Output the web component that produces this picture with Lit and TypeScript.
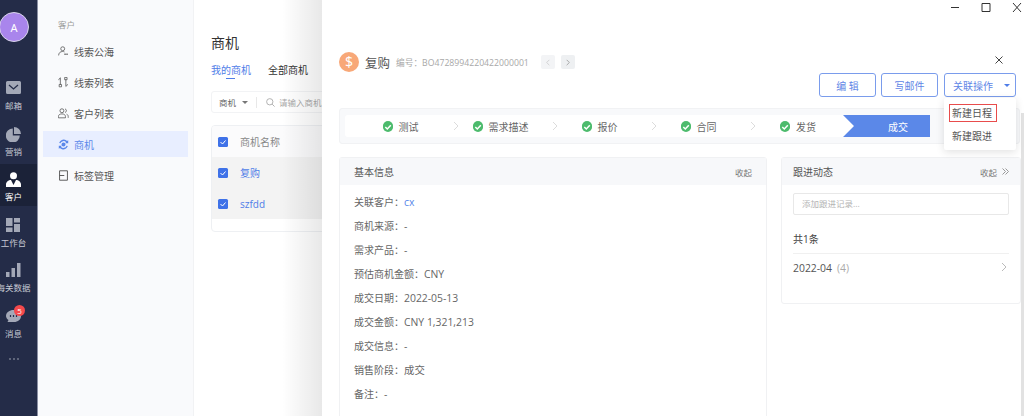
import { LitElement, html, css, svg } from "lit";
import { customElement } from "lit/decorators.js";

const railItems = [
  { label: "邮箱", icon: svg`<path d="M0 1.500A1.500 1.500 0 0 1 1.500 0h12A1.500 1.500 0 0 1 15 1.500v10a1.500 1.500 0 0 1-1.500 1.500h-12A1.500 1.500 0 0 1 0 11.500z" fill="#a3a8b7"/><path d="M3 4l4.500 4L12 4" fill="none" stroke="#242c48" stroke-width="1.300"/>` },
  { label: "营销", icon: svg`<path d="M6.800 1.500v7h7A7 7 0 1 1 6.800 1.500z" fill="#a3a8b7"/><path d="M8 0a7 7 0 0 1 7 7H8z" fill="#a3a8b7"/>` },
  { label: "客户", active: true, icon: svg`<circle cx="7.500" cy="3.700" r="3.500" fill="#fff"/><path d="M0 15v-2.500C0 10 2.500 8 5 8l2.500 5L10 8c2.500 0 5 2 5 4.500V15z" fill="#fff"/>` },
  { label: "工作台", icon: svg`<path d="M0 0h6.500v8H0zM8 0h6v4.500H8zM8 6h6v8H8zM0 9.500h6.500V14H0z" fill="#a3a8b7"/>` },
  { label: "海关数据", icon: svg`<path d="M0 9h3.500v5H0zM5.500 5H9v9H5.500zM11 0h3.500v14H11z" fill="#a3a8b7"/>` },
  { label: "消息", badge: "5", icon: svg`<path d="M7.500 1C11.500 1 15 3.500 15 7s-3 6-7 6H1.500l1-2C1 10 0 8.500 0 7c0-3.500 3.500-6 7.500-6z" fill="#a3a8b7"/><path d="M4.500 6v2M7.500 6v2M10.500 6v2" stroke="#242c48" stroke-width="1.200"/>` },
];

const navItems = [
  { label: "线索公海", icon: svg`<circle cx="6" cy="3.500" r="2.500" fill="none" stroke="#555" stroke-width="1"/><path d="M.8 12c0-3 2-5 5-5 1 0 2 .2 2.500.6" fill="none" stroke="#555"/><path d="M8 9.500h2v2H8zM10.500 9.500h2v2h-2z" fill="#777"/>` },
  { label: "线索列表", icon: svg`<path d="M3 1v9M3 1C1.500 2 1 3 1 4M10 12V3M10 12c1.500-1 2-2 2-3M1.500 9.500h3v3h-3zM8.500.5h3v3h-3z" fill="none" stroke="#555"/>` },
  { label: "客户列表", icon: svg`<circle cx="5" cy="3.500" r="2.500" fill="none" stroke="#555"/><path d="M.5 12.500v-1.500c0-2 1.500-3.500 4.500-3.500s4.500 1.500 4.500 3.500v1.500zM9 1.200c2 .3 2.500 3.600 0 4.600M11 7.800c1.300.6 2 1.700 2 3v1.700" fill="none" stroke="#555"/>` },
  { label: "商机", active: true, icon: svg`<path d="M1.500 5a6 6 0 0 1 10-2.500L13 1.500v4H9l1.300-1.300A4.300 4.300 0 0 0 3 5.500zM12.500 9a6 6 0 0 1-10 2.500L1 12.500v-4h4L3.700 9.800A4.300 4.300 0 0 0 11 8.500z" fill="#5b88ea"/><circle cx="7" cy="7" r="2.500" fill="#5b88ea"/>` },
  { label: "标签管理", icon: svg`<path d="M2 1h10v12H2zM2 7h6" fill="none" stroke="#555" stroke-width="1.200"/>` },
];

const steps = ["测试", "需求描述", "报价", "合同", "发货"];

const details: [string, string, boolean?][] = [
  ["关联客户：", "cx", true],
  ["商机来源：", "-"],
  ["需求产品：", "-"],
  ["预估商机金额：", "CNY"],
  ["成交日期：", "2022-05-13"],
  ["成交金额：", "CNY 1,321,213"],
  ["成交信息：", "-"],
  ["销售阶段：", "成交"],
  ["备注：", "-"],
];

const chevron = html`<svg class="chev" width="6" height="10" viewBox="0 0 6 10"><path d="M1 1l4 4-4 4" fill="none" stroke="currentColor"/></svg>`;
const check = html`<svg class="tick" width="10" height="10" viewBox="0 0 10 10"><path d="M2.300 5 4.300 7 7.800 3.300" fill="none" stroke="#fff" stroke-width="1.500"/></svg>`;
const box = html`<span class="box"><svg width="8" height="8" viewBox="0 0 8 8"><path d="M1.500 4l2 2 3-3.500" fill="none" stroke="#fff" stroke-width="1"/></svg></span>`;

@customElement("app-root")
export class AppRoot extends LitElement {
  static styles = css`
    :host {
      display: block;
      width: 1024px;
      height: 416px;
      overflow: hidden;
      position: relative;
      font-family: "Open Sans", "Noto Sans CJK SC", sans-serif;
      font-size: 10px;
      color: #555;
      background: #fff;
    }
    .layout { display: flex; height: 416px; }
    .rail {
      width: 37px;
      flex: none;
      background: #242c48;
      border-right: 1px solid #8a8fa3;
      display: flex;
      flex-direction: column;
      color: #c6c9d3;
      overflow: hidden;
    }
    .avatar {
      width: 28px;
      height: 28px;
      margin: 12px 0 0 -1px;
      border-radius: 50%;
      background: #a985ec;
      border: 1px solid #d8d4ea;
      color: #fff;
      font-size: 11px;
      display: flex;
      align-items: center;
      justify-content: center;
      font-family: "Noto Sans", sans-serif;
      flex: none;
    }
    .rail-list { margin-top: 31px; display: flex; flex-direction: column; gap: 3.500px; }
    .rail-item {
      height: 42px;
      padding: 8px 10px 0 0;
      display: flex;
      flex-direction: column;
      align-items: center;
      gap: 4px;
      font-size: 8.500px;
      line-height: 11px;
      white-space: nowrap;
      box-sizing: border-box;
    }
    .rail-item.active { background: #1b2238; color: #fff; }
    .rail-icon { position: relative; width: 15px; height: 15px; display: block; flex: none; }
    .rail-icon svg { display: block; }
    .badge {
      position: absolute;
      top: -4px;
      left: 8px;
      width: 11px;
      height: 11px;
      border-radius: 50%;
      background: #f4494c;
      color: #fff;
      font-size: 8px;
      line-height: 11px;
      text-align: center;
    }
    .more { width: 27px; display: flex; justify-content: center; margin-top: 15px; }
    .more svg { display: block; }
    .nav {
      width: 156px;
      flex: none;
      background: #f9fafc;
      border-right: 1px solid #f1f2f4;
      box-sizing: border-box;
      padding: 18px 5px 0;
    }
    .nav-title { font-size: 8.500px; color: #9a9a9a; padding-left: 15px; line-height: 14px; }
    .nav-list { margin-top: 6px; display: flex; flex-direction: column; gap: 5px; }
    .nav-item {
      height: 26px;
      display: flex;
      align-items: center;
      gap: 5px;
      padding-left: 15px;
      font-size: 10px;
      color: #555;
    }
    .nav-item.active { background: #e8eeff; color: #5b88ea; }
    .main { flex: 1; padding: 33px 17px 0; box-sizing: border-box; }
    .main h1 { font-size: 14px; font-weight: 400; color: #333; margin: 0; line-height: 20px; }
    .tabs { display: flex; gap: 17px; margin-top: 10px; font-size: 10px; line-height: 14px; color: #333; }
    .tab { position: relative; padding-bottom: 2px; }
    .tab.on { color: #4f7de8; }
    .tab.on::after {
      content: "";
      position: absolute;
      left: 15px;
      width: 9px;
      bottom: 0;
      height: 1px;
      background: #4f7de8;
    }
    .filter {
      margin-top: 12px;
      height: 22px;
      border: 1px solid #f2f3f5;
      border-radius: 3px;
      display: flex;
      align-items: center;
      padding-left: 7px;
      gap: 6px;
      box-sizing: border-box;
      color: #666;
      font-size: 8.500px;
    }
    .caret { width: 0; height: 0; border: 3px solid transparent; border-top: 3px solid #777; border-bottom: 0; }
    .sep { width: 1px; height: 11px; background: #e8e8e8; margin: 0 3px 0 2px; }
    .ph { color: #aaa; margin-left: -2px; white-space: nowrap; }
    .table {
      margin-top: 12px;
      height: 107px;
      border: 1px solid #eef0f3;
      border-radius: 4px;
      box-sizing: border-box;
      overflow: hidden;
      font-size: 10px;
    }
    .tr { height: 31px; display: flex; align-items: center; gap: 12px; padding-left: 6px; }
    .tr.head { color: #888; background: #fbfbfc; }
    .tr.row { background: #f3f3f3; color: #4f7de8; }
    .box {
      width: 10px;
      height: 10px;
      border-radius: 1.500px;
      background: #3f72e8;
      display: flex;
      align-items: center;
      justify-content: center;
      flex: none;
    }
    .shade {
      position: absolute;
      left: 282px;
      top: 0;
      bottom: 0;
      width: 40px;
      background: linear-gradient(to right, rgba(0,0,0,0), rgba(0,0,0,.09));
    }
    .drawer {
      position: absolute;
      left: 322px;
      top: 0;
      right: 0;
      bottom: 0;
      background: #fff;
      padding: 0 4px 0 17px;
      box-sizing: border-box;
      display: flex;
      flex-direction: column;
    }
    .win {
      position: absolute;
      top: 2px;
      right: 2px;
      display: flex;
      align-items: center;
      gap: 21px;
      height: 11px;
    }
    .win svg { display: block; }
    .close { position: absolute; top: 56px; right: 21px; display: block; }
    .title-row {
      margin-top: 52px;
      height: 20px;
      display: flex;
      align-items: center;
      flex: none;
    }
    .coin {
      width: 20px;
      height: 20px;
      border-radius: 50%;
      background: #f8a878;
      color: #fff;
      font-size: 14px;
      line-height: 20px;
      text-align: center;
      font-family: "Noto Sans", sans-serif;
    }
    .title-row b { font-weight: 400; font-size: 12.500px; color: #555; margin-left: 6px; }
    .code { font-size: 8.700px; color: #a8a8a8; margin-left: 6px; white-space: nowrap; }
    .pager {
      width: 14px;
      height: 14px;
      background: #eef0f2;
      border-radius: 2px;
      display: flex;
      align-items: center;
      justify-content: center;
      color: #888;
    }
    .pager.first { margin-left: 12px; margin-right: 6px; color: #c2c2c2; background: #f3f4f6; }
    .pager .chev { width: 4px; height: 7px; }
    .pager .flip { transform: scaleX(-1); }
    .actions { display: flex; justify-content: flex-end; gap: 5px; margin-top: 1px; padding-right: 4px; height: 24px; flex: none; }
    .btn {
      height: 24px;
      width: 57px;
      border: 1px solid #7a9cec;
      border-radius: 3px;
      box-sizing: border-box;
      color: #5f86e6;
      font-size: 10px;
      display: flex;
      align-items: center;
      justify-content: center;
    }
    .btn.wide { width: 72px; margin-left: 1px; justify-content: flex-start; padding-left: 8px; gap: 11px; }
    .btn .caret { border-top-color: #4f7de8; }
    .stage {
      margin-top: 11px;
      height: 36px;
      background: #f8f9fb;
      border: 1px solid #f1f2f4;
      border-radius: 3px;
      box-sizing: border-box;
      padding: 6px 5px;
      width: 681px;
      flex: none;
    }
    .stage-in { display: flex; height: 22px; width: 585px; background: #fff; border-radius: 3px; }
    .step {
      width: 99px;
      flex: none;
      position: relative;
      display: flex;
      align-items: center;
      justify-content: center;
      gap: 6px;
      font-size: 10px;
      color: #666;
      padding-right: 10px;
      box-sizing: border-box;
    }
    .step:first-child { width: 111px; padding-right: 0; }
    .step:nth-child(5) { width: 90px; padding-right: 0; }
    .step .chev { position: absolute; right: -3px; color: #dcdcdc; top: 6px; }
    .tick { width: 10px; height: 10px; border-radius: 50%; background: #4dbb6d; flex: none; }
    .done {
      width: 87px;
      flex: none;
      box-sizing: border-box;
      padding-left: 23px;
      background: #5b88e8;
      color: #fff;
      font-size: 10px;
      display: flex;
      align-items: center;
      justify-content: center;
      clip-path: polygon(0 0, 100% 0, 100% 100%, 0 100%, 11px 50%);
    }
    .cards { display: flex; gap: 14px; margin-top: 13px; align-items: flex-start; }
    .card {
      border: 1px solid #f0f1f3;
      border-radius: 3px;
      box-sizing: border-box;
      background: #fff;
      flex: none;
    }
    .card.left { width: 428px; height: 280px; }
    .card.right { width: 240px; height: 147px; }
    .card-head {
      height: 27px;
      background: #f7f8fa;
      display: flex;
      align-items: center;
      justify-content: space-between;
      padding: 0 14px;
      font-size: 10px;
      color: #555;
    }
    .card.right .card-head { padding: 0 11px; }
    .fold { font-size: 8.500px; color: #777; display: flex; align-items: center; gap: 5px; }
    .fold svg { display: block; }
    .rows { padding: 5px 14px; display: flex; flex-direction: column; }
    .rows div { height: 24px; line-height: 24px; font-size: 10px; color: #666; white-space: nowrap; }
    .rows span { font-size: 10.400px; }
    .rows a { color: #5b88ea; }
    .follow { padding: 8px 11px 0; }
    .input {
      height: 22px;
      border: 1px solid #e8e8e8;
      border-radius: 2px;
      box-sizing: border-box;
      padding-left: 8px;
      color: #b4b4b4;
      font-size: 8.500px;
      line-height: 20px;
    }
    .total { margin-top: 16px; height: 22px; line-height: 16px; font-size: 10px; color: #444; border-bottom: 1px solid #f0f0f0; }
    .month { display: flex; justify-content: space-between; align-items: center; height: 28px; font-size: 10.400px; color: #555; }
    .month i { font-style: normal; color: #aaa; margin-left: 5px; }
    .month .chev { color: #bbb; margin-right: 2px; margin-top: -3px; }
    .menu {
      position: absolute;
      left: 944px;
      top: 98px;
      width: 72px;
      height: 52px;
      background: #fff;
      box-shadow: 0 2px 8px rgba(0,0,0,.12);
      border-radius: 2px;
      box-sizing: border-box;
      padding: 6px 5px;
      font-size: 10px;
      color: #555;
    }
    .menu div { line-height: 16px; height: 18px; padding-left: 2px; border: 1px solid transparent; box-sizing: border-box; }
    .menu .pick { border-color: #e84c4c; width: 48px; }
    .menu div + div { margin-top: 5px; }
    .scroll { position: absolute; right: 0; top: 113px; bottom: 0; width: 3px; background: #e2e2e2; }
  `;

  render() {
    return html`
      <div class="layout">
        <aside class="rail">
          <div class="avatar">A</div>
          <div class="rail-list">
            ${railItems.map(
              (r) => html`<div class="rail-item ${r.active ? "active" : ""}">
                <span class="rail-icon">
                  <svg width="15" height="15" viewBox="0 0 15 15">${r.icon}</svg>
                  ${r.badge ? html`<span class="badge">${r.badge}</span>` : ""}
                </span>
                <span>${r.label}</span>
              </div>`
            )}
          </div>
          <div class="more"><svg width="10" height="2" viewBox="0 0 10 2"><circle cx="1" cy="1" r=".7" fill="#c6c9d3"/><circle cx="5" cy="1" r=".7" fill="#c6c9d3"/><circle cx="9" cy="1" r=".7" fill="#c6c9d3"/></svg></div>
        </aside>
        <nav class="nav">
          <div class="nav-title">客户</div>
          <div class="nav-list">
            ${navItems.map(
              (n) => html`<div class="nav-item ${n.active ? "active" : ""}">
                <svg width="11" height="11" viewBox="0 0 14 14">${n.icon}</svg>
                <span>${n.label}</span>
              </div>`
            )}
          </div>
        </nav>
        <main class="main">
          <h1>商机</h1>
          <div class="tabs">
            <span class="tab on">我的商机</span>
            <span class="tab">全部商机</span>
          </div>
          <div class="filter">
            <span>商机</span><span class="caret"></span><span class="sep"></span>
            <svg width="9" height="9" viewBox="0 0 10 10"><circle cx="4.200" cy="4.200" r="3.500" fill="none" stroke="#aaa"/><path d="M6.800 6.800 9.500 9.500" stroke="#aaa"/></svg>
            <span class="ph">请输入商机名称</span>
          </div>
          <div class="table">
            <div class="tr head">${box}<span>商机名称</span></div>
            <div class="tr row">${box}<span>复购</span></div>
            <div class="tr row">${box}<span>szfdd</span></div>
          </div>
        </main>
      </div>
      <div class="shade"></div>
      <section class="drawer">
        <div class="win">
          <svg width="9" height="11" viewBox="0 0 9 11"><path d="M0 5.500h8" stroke="#333"/></svg>
          <svg width="10" height="11" viewBox="0 0 10 11"><path d="M1 1.500h8v8H1z" fill="none" stroke="#333"/></svg>
          <svg width="10" height="11" viewBox="0 0 10 11"><path d="M1 1l8 9M9 1l-8 9" fill="none" stroke="#333"/></svg>
        </div>
        <svg class="close" width="8" height="8" viewBox="0 0 8 8"><path d="M.5.500l7 7M7.500.500l-7 7" stroke="#444"/></svg>
        <div class="title-row">
          <span class="coin">$</span>
          <b>复购</b>
          <span class="code">编号：BO4728994220422000001</span>
          <span class="pager first"><span class="flip">${chevron}</span></span>
          <span class="pager">${chevron}</span>
        </div>
        <div class="actions">
          <span class="btn">编 辑</span>
          <span class="btn">写邮件</span>
          <span class="btn wide">关联操作<span class="caret"></span></span>
        </div>
        <div class="stage">
          <div class="stage-in">
            ${steps.map(
              (s, i) => html`<div class="step">
                <span class="tick">${check}</span><span>${s}</span>
                ${i < 4 ? chevron : ""}
              </div>`
            )}
            <div class="done">成交</div>
          </div>
        </div>
        <div class="cards">
          <div class="card left">
            <div class="card-head"><span>基本信息</span><span class="fold">收起</span></div>
            <div class="rows">
              ${details.map(
                ([k, v, link]) => html`<div>${k}<span>${link ? html`<a>${v}</a>` : v}</span></div>`
              )}
            </div>
          </div>
          <div class="card right">
            <div class="card-head"><span>跟进动态</span><span class="fold">收起<svg width="7" height="7" viewBox="0 0 7 7"><path d="M.5.500l3 3-3 3M3.500.500l3 3-3 3" fill="none" stroke="#999"/></svg></span></div>
            <div class="follow">
              <div class="input">添加跟进记录...</div>
              <div class="total">共1条</div>
              <div class="month"><span>2022-04<i>(4)</i></span>${chevron}</div>
            </div>
          </div>
        </div>
        <div class="scroll"></div>
      </section>
      <div class="menu">
        <div class="pick">新建日程</div>
        <div>新建跟进</div>
      </div>
    `;
  }
}
